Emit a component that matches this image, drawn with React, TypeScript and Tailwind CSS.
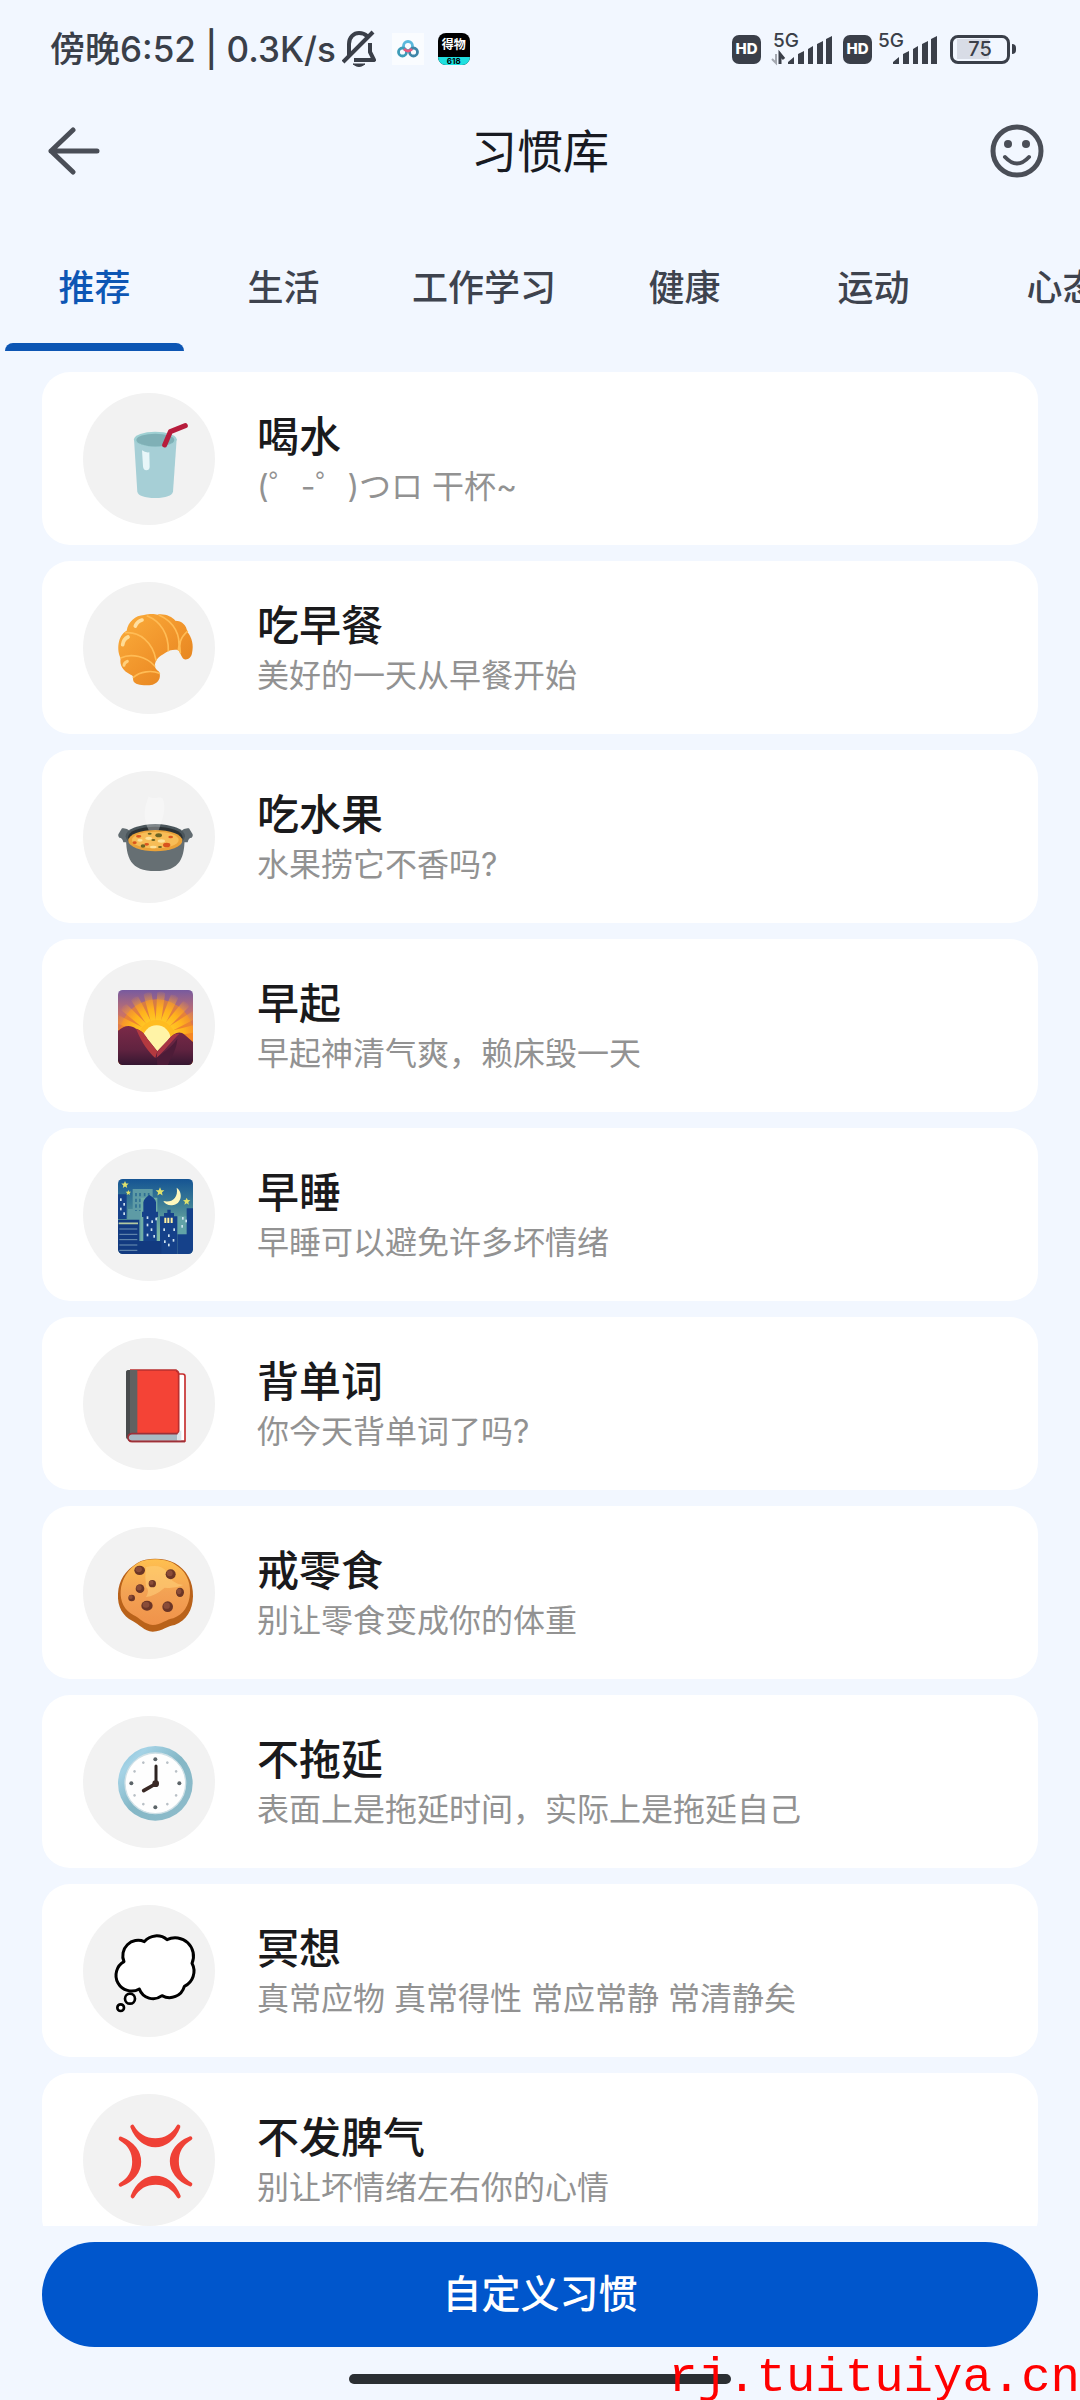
import type { ReactNode } from "react"

const tabs = ["推荐", "生活", "工作学习", "健康", "运动", "心态"]

function CupIcon() {
  return (
    <>
      <path d="M48 48 L58 206 Q62 224 112 225 Q160 224 165 206 L176 48 Z" fill="#a6cfd6" />
      <ellipse cx="112" cy="49" rx="64" ry="23" fill="#9fd0d3" />
      <ellipse cx="112" cy="51" rx="57" ry="19" fill="#7fb0b6" />
      <path d="M58 56 Q112 88 166 56 Q150 70 112 70 Q74 70 58 56Z" fill="#8cbbc2" />
      <path d="M140 66 L157 26 L202 8" fill="none" stroke="#b71c3c" strokeWidth="15" strokeLinecap="round" strokeLinejoin="round" />
      <path d="M72 82 Q82 90 94 88 L95 132 Q94 142 85 142 Q76 142 75 130Z" fill="#e8f6f9" />
    </>
  )
}

function CroissantIcon() {
  return (
    <>
      <defs>
        <linearGradient id="crust" x1="0" y1="0" x2="1" y2="1">
          <stop offset="0" stopColor="#fbae3c" />
          <stop offset="0.55" stopColor="#f0932a" />
          <stop offset="1" stopColor="#e07f1c" />
        </linearGradient>
      </defs>
      <path
        d="M46 206 C44 196 48 192 38 188 C14 176 4 160 8 138 C-4 116 -2 70 26 56 C30 30 52 10 78 9 C96 4 112 6 118 8 C140 4 162 14 172 26 C192 26 206 40 208 60 C222 76 228 100 222 124 C220 140 202 148 194 138 C188 130 186 118 180 114 C168 112 156 114 146 120 C130 130 116 138 112 152 C108 164 112 170 122 178 C130 190 126 212 104 218 C84 222 50 220 46 206Z"
        fill="url(#crust)"
      />
      <path
        d="M22 62 C64 58 104 90 114 144 M8 138 C40 122 86 134 110 162 M88 12 C128 28 152 66 151 116 M124 10 C168 30 190 70 181 114 M208 58 C186 78 182 96 187 122 M46 196 C66 178 102 174 124 184"
        fill="none"
        stroke="#ffbc55"
        strokeWidth="5"
        strokeLinecap="round"
      />
      <path d="M52 42 Q58 28 72 24" fill="none" stroke="#ffdf9f" strokeWidth="11" strokeLinecap="round" />
      <path d="M14 98 Q16 82 30 75" fill="none" stroke="#ffdc94" strokeWidth="11" strokeLinecap="round" />
      <path d="M18 160 Q18 152 28 148" fill="none" stroke="#ffd07c" strokeWidth="9" strokeLinecap="round" />
    </>
  )
}

function PotIcon() {
  return (
    <>
      <path d="M12 82 Q26 80 36 90 L34 124 H16 Q14 110 4 110 Q-1 108 1 100Z" fill="#616b70" />
      <path d="M213 82 Q199 80 189 90 L191 124 H209 Q211 110 221 110 Q226 108 224 100Z" fill="#616b70" />
      <path d="M24 104 C24 170 36 210 112 210 C188 210 200 170 200 104Z" fill="#666f73" />
      <ellipse cx="112" cy="106" rx="89" ry="37" fill="#4b565b" />
      <ellipse cx="112" cy="109" rx="82" ry="32" fill="#2b3134" />
      <ellipse cx="112" cy="119" rx="81" ry="32" fill="#eaa238" />
      <ellipse cx="112" cy="117" rx="70" ry="25" fill="#f7bd57" />
      <g fill="#d9541e">
        <ellipse cx="62" cy="106" rx="8" ry="4" />
        <ellipse cx="86" cy="130" rx="7" ry="4" />
        <ellipse cx="146" cy="132" rx="11" ry="7" />
        <ellipse cx="158" cy="108" rx="7" ry="4" />
        <ellipse cx="50" cy="125" rx="6" ry="4" />
      </g>
      <g fill="#6b6424">
        <ellipse cx="75" cy="135" rx="7" ry="5" />
        <ellipse cx="122" cy="103" rx="10" ry="6" />
        <ellipse cx="126" cy="138" rx="6" ry="3" />
        <ellipse cx="95" cy="98" rx="6" ry="3" />
        <ellipse cx="106" cy="117" rx="6" ry="3" />
      </g>
      <g fill="#fde29a">
        <ellipse cx="92" cy="112" rx="10" ry="5" />
        <ellipse cx="130" cy="120" rx="11" ry="5" />
        <ellipse cx="106" cy="138" rx="10" ry="4" />
        <ellipse cx="66" cy="118" rx="8" ry="4" />
      </g>
      <path d="M92 88 C70 40 84 10 92 -14 C104 -2 126 -16 134 -8 C146 20 136 50 122 88Z" fill="#fff" fillOpacity="0.3" />
    </>
  )
}

const rays = [-84, -66, -48, -30, -12, 6, 24, 42, 60, 78]

function SunriseIcon() {
  return (
    <>
      <defs>
        <linearGradient id="dawn" x1="0" y1="0" x2="0" y2="1">
          <stop offset="0" stopColor="#775a9f" />
          <stop offset="0.3" stopColor="#c3706f" />
          <stop offset="0.62" stopColor="#f5842b" />
        </linearGradient>
        <radialGradient id="glow" cx="116" cy="140" r="140" gradientUnits="userSpaceOnUse">
          <stop offset="0.2" stopColor="#ffd42a" />
          <stop offset="0.6" stopColor="#ffb21c" />
          <stop offset="1" stopColor="#ff9d2e" stopOpacity="0" />
        </radialGradient>
        <linearGradient id="hill" x1="0" y1="0" x2="0" y2="1">
          <stop offset="0" stopColor="#7b2a48" />
          <stop offset="0.6" stopColor="#612340" />
          <stop offset="1" stopColor="#351731" />
        </linearGradient>
        <clipPath id="frame">
          <rect width="225" height="225" rx="14" />
        </clipPath>
      </defs>
      <g clipPath="url(#frame)">
        <rect width="225" height="225" fill="url(#dawn)" />
        <circle cx="116" cy="140" r="112" fill="#f98a1c" fillOpacity="0.6" />
        {rays.map((deg) => (
          <path key={deg} d="M110 140 L104 8 Q116 0 128 8 L122 140Z" fill="url(#glow)" transform={`rotate(${deg} 116 140)`} />
        ))}
        <circle cx="116" cy="146" r="56" fill="#ffb81f" fillOpacity="0.8" />
        <circle cx="116" cy="148" r="42" fill="#fff3a6" />
        <path d="M0 122 C20 104 38 104 54 116 C72 122 78 130 88 146 L118 184 L150 150 C166 130 184 120 200 134 L225 156 V225 H0Z" fill="url(#hill)" />
        <path d="M54 116 C72 122 78 130 88 146 L118 184 L112 204 C92 186 72 160 54 116Z" fill="#b3393f" />
        <path d="M118 184 L150 150 C162 134 174 130 184 132 C170 142 150 172 116 204Z" fill="#a83544" />
        <path d="M118 225 L116 204 C142 186 168 162 178 146 C176 180 160 200 150 225Z" fill="#4d1c38" />
      </g>
    </>
  )
}

// x, y of the lit windows
const cityWindows = [
  [86, 112], [100, 124], [86, 134], [98, 148], [112, 116], [86, 164], [106, 168],
  [136, 148], [150, 166], [166, 148], [138, 184], [164, 180], [150, 194],
  [6, 58], [16, 72], [6, 86], [16, 100], [192, 114], [202, 122], [190, 138],
]

const cityStars = [[21, 17, 11], [31, 41, 8], [126, 38, 13], [206, 67, 11]]

function NightIcon() {
  return (
    <>
      <defs>
        <linearGradient id="dusk" x1="0" y1="0" x2="0" y2="1">
          <stop offset="0" stopColor="#155493" />
          <stop offset="0.35" stopColor="#3e7f96" />
          <stop offset="0.75" stopColor="#7fb8a4" />
        </linearGradient>
        <clipPath id="night">
          <rect width="225" height="225" rx="14" />
        </clipPath>
      </defs>
      <g clipPath="url(#night)">
        <rect width="225" height="225" fill="url(#dusk)" />
        <path d="M44 30 H104 V190 H30 V90 H44Z" fill="#5e9ba5" />
        <path d="M54 42 V96 M66 42 V96 M80 42 V60 M92 42 V60" stroke="#2e6f93" strokeWidth="5" strokeDasharray="10 7" />
        <path d="M68 100 V56 H118 V186 H68Z" fill="#6fada6" />
        <path d="M178 112 H210 V166 H178Z" fill="#62a3a7" />
        <path d="M0 46 H26 V120 H0Z" fill="#15418a" />
        <path d="M76 98 V70 Q78 58 94 48 Q112 58 114 70 V98 H120 V114 H116 V190 H76 V114 H72 V98Z" fill="#15418a" />
        <path d="M126 124 V112 H138 V102 H148 V92 H158 V102 H168 V112 H178 V225 H126Z" fill="#15418a" />
        <path d="M206 88 H225 V225 H178 V166 H206Z" fill="#15418a" />
        <path d="M0 122 H64 V186 H130 V225 H0Z" fill="#123a80" />
        <path d="M2 133 H60" stroke="#b3c9a0" strokeWidth="5" />
        <path d="M4 150 H58 M4 166 H58 M4 182 H58 M4 198 H58 M4 214 H58" stroke="#6f93b4" strokeWidth="3" />
        <path d="M142 116 V132 M151 116 V132 M161 116 V132" stroke="#fff0a0" strokeWidth="6" />
        {cityWindows.map(([x, y]) => (
          <rect key={`${x}-${y}`} x={x} y={y} width="5" height="8" fill="#cfe3ef" />
        ))}
        <path d="M176 26 C196 40 192 76 162 79 C150 80 140 74 136 66 C160 72 182 58 176 26Z" fill="#fff8bd" />
        {cityStars.map(([x, y, r]) => (
          <path
            key={x}
            d="M0 -1 L.3 -.35 L1 -.3 L.45 .2 L.6 .9 L0 .5 L-.6 .9 L-.45 .2 L-1 -.3 L-.3 -.35Z"
            transform={`translate(${x} ${y}) scale(${r})`}
            fill="#dfe06c"
          />
        ))}
      </g>
    </>
  )
}

function BookIcon() {
  return (
    <>
      <path d="M170 18 H194 Q201 18 201 25 V220 H36 V196 H170Z" fill="#fff" stroke="#c62f2f" strokeWidth="5" strokeLinejoin="round" />
      <path d="M30 6 H172 Q182 8 182 18 V190 Q182 198 174 198 H30Z" fill="#f44336" />
      <path d="M174 8 Q182 10 182 18 V190 Q182 198 174 198" fill="none" stroke="#b92f2f" strokeWidth="5" />
      <path d="M36 6 H176" stroke="#b92f2f" strokeWidth="4" />
      <path d="M24 14 Q24 6 32 6 H58 V198 H36 Q28 202 28 214 Q24 210 24 202Z" fill="#616161" />
      <path d="M24 14 Q24 6 32 6 H36 V200 L28 214 Q24 210 24 202Z" fill="#484b4d" />
      <path d="M32 208 Q32 198 42 198 H178 V218 H40 Q32 218 32 208Z" fill="#a9bac4" />
      <path d="M178 198 L190 186 V218 H178Z" fill="#dbe4ea" />
      <path d="M178 197 H42 Q30 198 30 209 Q30 219 42 220 H201" fill="none" stroke="#9c3038" strokeWidth="5" />
    </>
  )
}

// cx, cy, rx, ry
const chips = [
  [65, 40, 16, 14], [158, 52, 15, 15], [103, 80, 11, 11], [66, 95, 13, 13],
  [186, 106, 12, 14], [41, 123, 10, 10], [87, 146, 17, 15], [149, 149, 16, 16],
]

function CookieIcon() {
  return (
    <>
      <defs>
        <linearGradient id="dough" x1="0" y1="0" x2="0" y2="1">
          <stop offset="0" stopColor="#ffc04f" />
          <stop offset="0.5" stopColor="#f3a254" />
          <stop offset="1" stopColor="#f0924a" />
        </linearGradient>
      </defs>
      <path d="M58 18 C86 0 140 2 170 18 C206 38 226 74 225 118 C224 160 206 190 170 204 C148 206 136 222 104 224 C78 222 64 202 44 192 C14 176 -2 150 0 110 C2 70 22 40 58 18Z" fill="#b9621a" />
      <path d="M60 18 C86 2 140 4 168 20 C202 40 218 70 216 108 C214 146 196 172 166 184 C146 186 130 204 104 204 C80 202 66 184 46 174 C20 160 6 134 8 102 C10 68 30 36 60 18Z" fill="url(#dough)" />
      <path d="M84 30 Q130 20 146 44 Q156 78 196 84 Q170 96 140 92 Q110 118 84 120 Q96 100 84 90 Q80 60 84 30Z" fill="#ffd27c" fillOpacity="0.55" />
      {chips.map(([cx, cy, rx, ry]) => (
        <g key={`${cx}-${cy}`}>
          <ellipse cx={cx} cy={cy} rx={rx} ry={ry} fill="#6b3526" />
          <ellipse cx={cx - 3} cy={cy - 3} rx={rx * 0.6} ry={ry * 0.6} fill="#8a4c38" />
        </g>
      ))}
    </>
  )
}

const hours = [0, 1, 2, 3, 4, 5, 6, 7, 8, 9, 10, 11]

function ClockIcon() {
  return (
    <>
      <defs>
        <linearGradient id="rim" x1="0" y1="0" x2="1" y2="1">
          <stop offset="0" stopColor="#7fbbd6" />
          <stop offset="0.2" stopColor="#a5d3e6" />
          <stop offset="0.5" stopColor="#84b7c6" />
          <stop offset="1" stopColor="#90bccb" />
        </linearGradient>
      </defs>
      <circle cx="112" cy="112" r="112" fill="url(#rim)" />
      <circle cx="112" cy="112" r="91" fill="#fefefe" stroke="#cfe0e6" strokeWidth="4" />
      {hours.map((h) => (
        <circle key={h} cx="112" cy="40" r={h % 3 === 0 ? 6 : 4} fill={h % 3 === 0 ? "#5c6468" : "#b9c0c6"} transform={`rotate(${h * 30} 112 112)`} />
      ))}
      <path d="M114 112 V60" stroke="#2d2422" strokeWidth="9" strokeLinecap="round" />
      <path d="M112 114 L77 134" stroke="#3a2925" strokeWidth="11" strokeLinecap="round" />
      <circle cx="113" cy="113" r="10" fill="#3a2925" />
    </>
  )
}

function ThoughtIcon() {
  return (
    <g fill="#fff" stroke="#000" strokeWidth="9" strokeLinejoin="round">
      <path d="M18 80 A46 46 0 0 1 79 20 A48 48 0 0 1 147 14 A55 55 0 0 1 222 85 A50 50 0 0 1 199 154 A46 46 0 0 1 132 182 A44 44 0 0 1 64 162 A47 47 0 0 1 18 80Z" />
      <circle cx="36" cy="191" r="15" strokeWidth="8" />
      <circle cx="8" cy="218" r="10" strokeWidth="8" />
    </g>
  )
}

function AngerIcon() {
  return (
    <g fill="#ef4136" stroke="#ef4136" strokeWidth="12" strokeLinecap="round" strokeLinejoin="round">
      <path d="M43 8 C72 82 152 82 181 8 C150 62 74 62 43 8Z" />
      <path d="M43 8 C72 82 152 82 181 8 C150 62 74 62 43 8Z" transform="rotate(90 112.5 112.5)" />
      <path d="M43 8 C72 82 152 82 181 8 C150 62 74 62 43 8Z" transform="rotate(180 112.5 112.5)" />
      <path d="M43 8 C72 82 152 82 181 8 C150 62 74 62 43 8Z" transform="rotate(270 112.5 112.5)" />
    </g>
  )
}

const habits: { title: string; note: string; icon: ReactNode }[] = [
  { title: "喝水", note: "(゜-゜)つロ 干杯~", icon: <CupIcon /> },
  { title: "吃早餐", note: "美好的一天从早餐开始", icon: <CroissantIcon /> },
  { title: "吃水果", note: "水果捞它不香吗?", icon: <PotIcon /> },
  { title: "早起", note: "早起神清气爽，赖床毁一天", icon: <SunriseIcon /> },
  { title: "早睡", note: "早睡可以避免许多坏情绪", icon: <NightIcon /> },
  { title: "背单词", note: "你今天背单词了吗?", icon: <BookIcon /> },
  { title: "戒零食", note: "别让零食变成你的体重", icon: <CookieIcon /> },
  { title: "不拖延", note: "表面上是拖延时间，实际上是拖延自己", icon: <ClockIcon /> },
  { title: "冥想", note: "真常应物 真常得性 常应常静 常清静矣", icon: <ThoughtIcon /> },
  { title: "不发脾气", note: "别让坏情绪左右你的心情", icon: <AngerIcon /> },
]

function HdBadge() {
  return (
    <span className="flex h-[29px] w-[29px] items-center justify-center rounded-[7px] bg-[#3a3f49] text-[15px] font-extrabold text-white">HD</span>
  )
}

function Signal({ busy }: { busy?: boolean }) {
  return (
    <span className="relative flex h-8 w-[60px] items-start">
      <span className="text-[19px] leading-4 font-medium">5G</span>
      <svg viewBox="0 0 60 32" className="absolute inset-0 h-8 w-[60px] overflow-visible">
        {busy && (
          <>
            <path d="M3 21 V30 L-1 26" fill="none" stroke="#a4a8b0" strokeWidth="2" />
            <path d="M7 31 V21 L11 26" fill="none" stroke="#3a3f49" strokeWidth="3" />
          </>
        )}
        <path d="M15 31 V29 L21 24 V31Z M25 31 V21 L31 18 V31Z M35 31 V16 L40 13 V31Z M44 31 V11 L50 8 V31Z M53 31 V6 L59 3 V31Z" fill="#3a3f49" />
      </svg>
    </span>
  )
}

function StatusBar() {
  return (
    <div className="flex h-[98px] items-center justify-between pr-16 pl-[50px] text-[#3a3f49]">
      <div className="flex items-center">
        <span className="text-[35px] font-medium whitespace-nowrap">傍晚6:52 | 0.3K/s</span>
        <svg viewBox="0 0 34 38" className="ml-[6px] h-[38px] w-[34px]" fill="none" stroke="#3a3f49" strokeWidth="4">
          <path d="M7 25 V14 C7 7 12 3 17 3 C21 3 23 4 25 6 M28 13 V22 L32 30 H12" strokeLinejoin="round" />
          <path d="M1 32 L31 2" />
          <path d="M11 34 H23 Q17 39 11 34Z" fill="#3a3f49" strokeWidth="1" />
        </svg>
        <span className="ml-4 flex h-8 w-8 items-center justify-center bg-white/60">
          <svg viewBox="0 0 22 18" className="h-[18px] w-[22px]" fill="none" strokeWidth="2.8">
            <circle cx="11" cy="6" r="4.5" stroke="#5ab8dc" />
            <circle cx="5.5" cy="12" r="4" stroke="#3f9cb8" />
            <circle cx="16.5" cy="12" r="4" stroke="#3f86a8" />
            <path d="M7 9 Q11 13 15 9" stroke="#ea5a7c" />
          </svg>
        </span>
        <span className="ml-[14px] flex h-8 w-8 flex-col items-center overflow-hidden rounded-[8px] bg-black">
          <span className="h-6 text-[12px] leading-6 font-bold text-white">得物</span>
          <span className="h-2 w-8 bg-[#1fe0e0] text-center text-[8px] leading-2 font-bold text-black">618</span>
        </span>
      </div>
      <div className="flex items-center">
        <HdBadge />
        <span className="ml-3">
          <Signal busy />
        </span>
        <span className="ml-[10px]">
          <HdBadge />
        </span>
        <span className="ml-[6px]">
          <Signal />
        </span>
        <span className="ml-3 flex h-[29px] w-[60px] items-center rounded-[8px] border-[3px] border-[#3a3f49] p-1">
          <span className="flex h-5 w-full items-center justify-center bg-linear-to-r from-[#d8dce6] from-70% to-transparent to-70% text-[20px] font-medium">75</span>
        </span>
        <span className="ml-[2px] h-[10px] w-1 rounded-r-sm bg-[#3a3f49]" />
      </div>
    </div>
  )
}

export default function App() {
  return (
    <div className="relative flex h-screen flex-col overflow-hidden bg-[#f2f7ff] font-['Inter','Noto_Sans_CJK_SC',sans-serif]">
      <StatusBar />
      <header className="flex h-[106px] shrink-0 items-center justify-between px-9">
        <button aria-label="返回" className="flex h-16 w-[76px] items-center justify-center">
          <svg viewBox="0 0 52 48" className="h-12 w-[52px]" fill="none" stroke="#4a4e57" strokeWidth="5" strokeLinecap="round" strokeLinejoin="round">
            <path d="M49 24 H3 M25 3 L3 24 L25 45" />
          </svg>
        </button>
        <h1 className="text-[46px] text-[#181a22]">习惯库</h1>
        <button aria-label="表情" className="flex h-16 w-[76px] items-center justify-end">
          <svg viewBox="0 0 54 54" className="h-[54px] w-[54px]" fill="none" stroke="#4a4e57" strokeWidth="5">
            <circle cx="27" cy="27" r="24" />
            <path d="M15 33 Q27 46 39 33" strokeWidth="4" strokeLinecap="round" />
            <circle cx="18" cy="20" r="4" fill="#4a4e57" stroke="none" />
            <circle cx="36" cy="20" r="4" fill="#4a4e57" stroke="none" />
          </svg>
        </button>
      </header>
      <nav className="flex h-[147px] shrink-0 overflow-hidden">
        {tabs.map((tab, i) => (
          <button
            key={tab}
            className={
              i === 0
                ? "flex min-w-[189px] shrink-0 flex-col items-center px-[5px] pt-5 text-[36px] font-medium text-[#0d56b4]"
                : "flex min-w-[189px] shrink-0 flex-col items-center px-[34px] pt-5 text-[36px] font-medium text-[#3e434e]"
            }
          >
            <span className="flex h-[119px] items-center pt-2">{tab}</span>
            {i === 0 && <span className="h-2 w-full rounded-t-full bg-[#0d56b4]" />}
          </button>
        ))}
      </nav>
      <ul className="mt-[21px] flex min-h-0 flex-1 flex-col gap-4 overflow-hidden px-[42px]">
        {habits.map((habit) => (
          <li key={habit.title} className="shrink-0">
            <button className="flex h-[173px] w-full items-center gap-[42px] rounded-[28px] bg-white px-[41px] text-left">
              <span className="flex h-[132px] w-[132px] shrink-0 items-center justify-center rounded-full bg-[#f2f2f2] pt-1 pl-3">
                <svg viewBox="0 0 225 225" className="h-[75px] w-[75px] overflow-visible" aria-hidden="true">
                  {habit.icon}
                </svg>
              </span>
              <span className="flex flex-col">
                <span className="text-[42px] leading-[56px] font-medium text-[#1a1a1c]">{habit.title}</span>
                <span className="text-[32px] leading-[44px] text-[#929292]">{habit.note}</span>
              </span>
            </button>
          </li>
        ))}
      </ul>
      <div className="flex shrink-0 flex-col items-center px-[42px] pt-4 pb-4">
        <button className="h-[105px] w-full rounded-full bg-[#0056cc] text-[39px] font-medium text-white">自定义习惯</button>
        <span className="mt-[27px] h-[10px] w-[382px] rounded-full bg-[#2b2f33]" />
      </div>
      <span className="absolute right-0 bottom-0 font-['Liberation_Mono',monospace] text-[49px] leading-[44px] text-[#ff0000]">rj.tuituiya.cn</span>
    </div>
  )
}
